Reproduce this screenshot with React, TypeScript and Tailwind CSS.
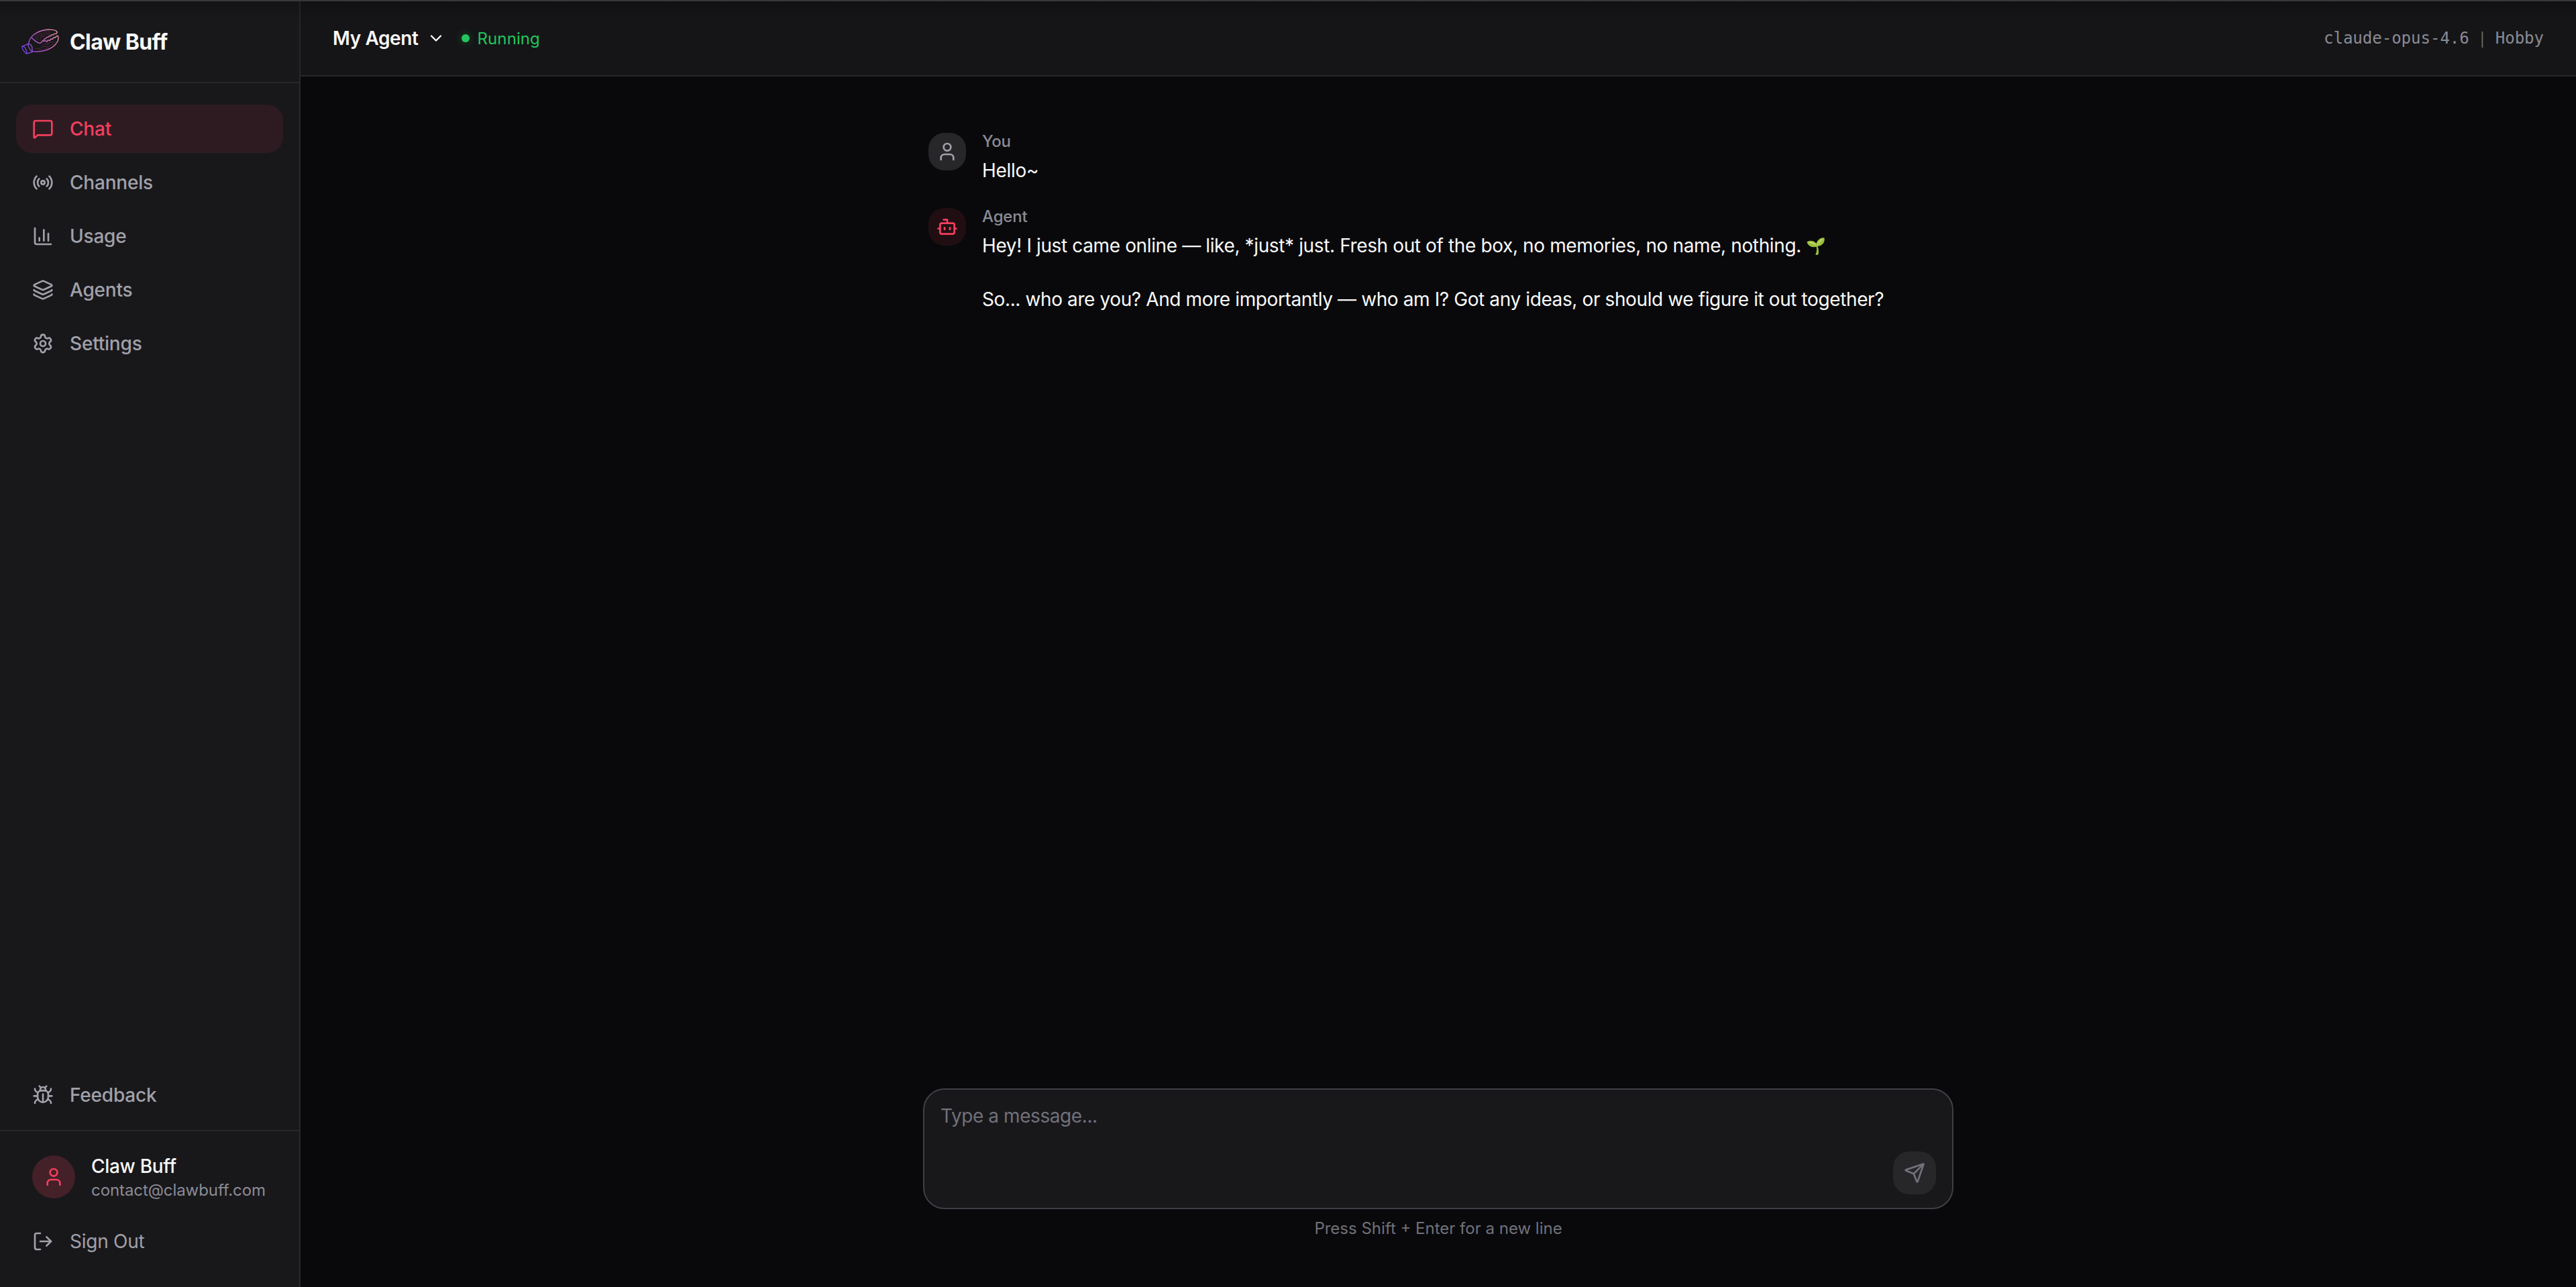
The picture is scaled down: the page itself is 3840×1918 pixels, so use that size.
import {
  Bot,
  Bug,
  ChartColumn,
  ChevronDown,
  Layers,
  LogOut,
  MessageSquare,
  Radio,
  Send,
  Settings,
  User,
} from 'lucide-react'

const links = [
  { label: 'Chat', icon: MessageSquare, active: true },
  { label: 'Channels', icon: Radio },
  { label: 'Usage', icon: ChartColumn },
  { label: 'Agents', icon: Layers },
  { label: 'Settings', icon: Settings },
]

function ClawLogo() {
  return (
    <svg viewBox="90 120 180 126" className="h-[42px] w-[60px] shrink-0" fill="none">
      <defs>
        <linearGradient id="claw" x1="100" y1="230" x2="262" y2="140" gradientUnits="userSpaceOnUse">
          <stop offset="0" stopColor="#6440e0" />
          <stop offset="0.45" stopColor="#bb58c8" />
          <stop offset="1" stopColor="#e59aa0" />
        </linearGradient>
      </defs>
      {/* circuit traces */}
      <g stroke="#8a2f62" strokeOpacity="0.5" strokeWidth="3">
        <path d="M160 176V158l12-10h18l8-8h26M168 178v-14l10-8h16l10-8h24M180 180v-14l8-6h14" />
        <path d="M158 214h22l12-9h28l10-9h16M172 221h24l12-8h18M186 205l10-10h18l12-9h24M206 187h14" />
      </g>
      <g stroke="url(#claw)" strokeWidth="4" strokeLinejoin="round" strokeLinecap="round">
        {/* cuff */}
        <path d="M98 205l28-12c-1 8 3 18 10 27l8 10-26 7c-8-6-20-20-20-32z" />
        <path d="M98 205c8-2 14 4 18 14s5 14 2 18" />
        <path d="M126 193c10 0 17 8 18 20 0 6-1 11 2 14" />
        {/* upper pincer */}
        <path d="M128 193c2-26 24-47 56-58 26-8 58-8 68 1 4 4 4 8 1 11l-10 1-5 5-7-1-4 6-7-1-4 6-7 0-4 7-7 1-3 7-5 1-6 9c-7 3-13 2-19-3l-9-6-14-13" />
        {/* lower pincer */}
        <path d="M195 182l8-3 7 4 5-7 8 3 4-8 8 2 4-8 8 0 5-6 7-2c5 12 0 27-12 40-22 22-63 35-101 30" />
      </g>
    </svg>
  )
}

function Sidebar() {
  return (
    <aside className="flex w-[448px] shrink-0 flex-col border-r-2 border-[#27272a] bg-[#18181b]">
      <div className="flex h-[122px] shrink-0 items-center gap-3.5 border-b-2 border-[#27272a] pl-[30px]">
        <ClawLogo />
        <span className="pt-0.5 text-[32px] font-bold tracking-[-0.6px] text-[#fafafa]">Claw Buff</span>
      </div>

      <nav className="flex flex-1 flex-col gap-2 px-6 pt-8">
        {links.map((l) => (
          <a
            key={l.label}
            className={
              l.active
                ? 'flex h-[72px] items-center gap-6 rounded-3xl bg-[#f43f5e]/10 px-6 text-[28px] font-medium tracking-[-0.2px] text-[#f43f5e]'
                : 'flex h-[72px] items-center gap-6 rounded-3xl px-6 text-[28px] font-medium tracking-[-0.2px] text-[#a1a1aa]'
            }
          >
            <l.icon className="size-8" />
            {l.label}
          </a>
        ))}
      </nav>

      <div className="px-6 pb-4">
        <a className="flex h-[72px] items-center gap-6 px-6 text-[28px] font-medium tracking-[-0.2px] text-[#a1a1aa]">
          <Bug className="size-8" />
          Feedback
        </a>
      </div>

      <div className="flex flex-col gap-6 border-t-2 border-[#27272a] px-6 py-8">
        <div className="flex items-center gap-6 px-6">
          <div className="flex size-16 items-center justify-center rounded-full bg-[#f43f5e]/20">
            <User className="size-8 text-[#f43f5e]" />
          </div>
          <div>
            <p className="text-[28px] leading-10 font-medium tracking-[-0.3px] text-[#fafafa]">Claw Buff</p>
            <p className="text-2xl leading-8 tracking-[-0.08px] text-[#8b8b95]">contact@clawbuff.com</p>
          </div>
        </div>
        <button className="flex h-[72px] items-center gap-6 px-6 text-[28px] tracking-[-0.26px] text-[#a1a1aa]">
          <LogOut className="size-8" />
          Sign Out
        </button>
      </div>
    </aside>
  )
}

function Header() {
  return (
    <header className="flex h-[112px] shrink-0 items-center justify-between border-b-2 border-[#27272a] bg-[#151517] px-12">
      <div className="flex items-center">
        <span className="text-[28px] font-semibold tracking-[-0.39px] text-[#fafafa]">My Agent</span>
        <ChevronDown className="ml-3 size-7 text-[#fafafa]" />
        <span className="ml-6 size-3 rounded-full bg-[#22c55e] shadow-[0_0_12px_rgba(34,197,94,0.35)]" />
        <span className="ml-3 pt-0.5 text-2xl tracking-[0.1px] text-[#22c55e]">Running</span>
      </div>
      <div className="flex items-center font-['DejaVu_Sans_Mono',monospace] text-2xl text-[#8b8b95]">
        <span>claude-opus-4.6</span>
        <span className="mx-4 flex w-[7px] justify-center pt-1 font-['Inter',sans-serif] text-xl text-[#71717a]">|</span>
        <span>Hobby</span>
      </div>
    </header>
  )
}

export default function App() {
  return (
    <div className="relative flex h-[1918px] w-full border-t-2 border-[#38383a] bg-[#09090b] font-['Inter',sans-serif] antialiased">
      <Sidebar />

      <main className="flex flex-1 flex-col">
        <Header />

        <div className="mx-auto flex w-[1536px] flex-1 flex-col gap-8 px-2 pt-20">
          <div className="flex items-start gap-6">
            <div className="mt-1 flex size-14 items-center justify-center rounded-3xl bg-[#27272a]">
              <User className="size-8 text-[#a1a1aa]" />
            </div>
            <div>
              <p className="mt-px mb-[7px] text-2xl leading-8 font-medium tracking-[-0.3px] text-[#8b8b95]">You</p>
              <p className="text-[28px] leading-10 tracking-[-0.3px] text-[#fafafa]">Hello~</p>
            </div>
          </div>

          <div className="flex items-start gap-6">
            <div className="mt-1 flex size-14 items-center justify-center rounded-3xl bg-[#f43f5e]/10">
              <Bot className="size-8 text-[#f43f5e]" />
            </div>
            <div>
              <p className="mt-px mb-[7px] text-2xl leading-8 font-medium tracking-[-0.2px] text-[#8b8b95]">Agent</p>
              <p className="text-[28px] leading-10 tracking-[-0.375px] text-[#fafafa]">
                Hey! I just came online — like, *just* just. Fresh out of the box, no memories, no name, nothing.{' '}
                <span className="relative bottom-px text-2xl leading-none">🌱</span>
              </p>
              <p className="mt-10 text-[28px] leading-10 tracking-[-0.39px] text-[#fafafa]">
                So... who are you? And more importantly — who am I? Got any ideas, or should we figure it out together?
              </p>
            </div>
          </div>
        </div>

        <div className="mx-auto w-[1536px] pb-[71px]">
          <div className="flex h-[180px] rounded-[32px] border-2 border-[#3f3f46] bg-[#18181b] pl-6">
            <textarea
              placeholder="Type a message..."
              className="mt-[19px] flex-1 resize-none bg-transparent text-[28px] leading-10 tracking-[-0.42px] text-[#fafafa] outline-none placeholder:text-[#71717a]"
            />
            <button className="mr-6 mb-5 flex size-16 items-center justify-center self-end rounded-3xl bg-[#27272a]">
              <Send className="size-8 text-[#71717a]" />
            </button>
          </div>
          <p className="mt-[13px] text-center text-2xl leading-8 text-[#71717a]">Press Shift + Enter for a new line</p>
        </div>
      </main>

      {/* soft shade under the top edge */}
      <div className="pointer-events-none absolute inset-x-0 top-0 h-7 bg-linear-to-b from-black/20 to-transparent" />
    </div>
  )
}
